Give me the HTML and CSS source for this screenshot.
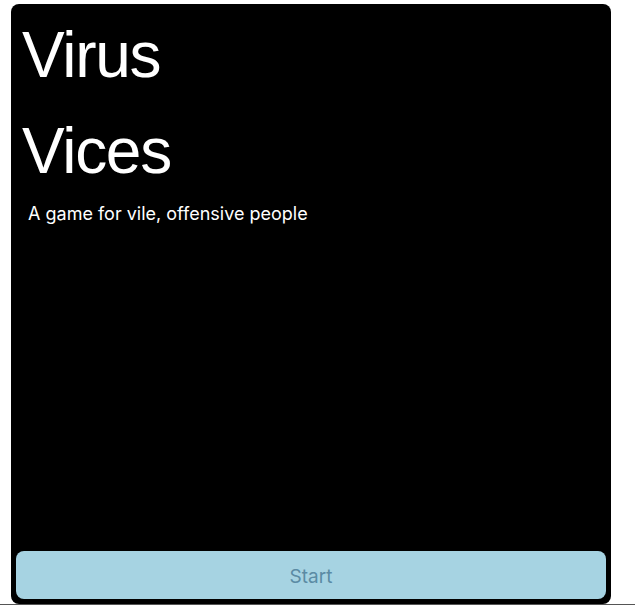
FILE: index.html
```html
<!DOCTYPE html>
<html>
<head>
<meta charset="utf-8">
<link rel="stylesheet" href="styles.css">
</head>
<body>
<div class="page">
  <div class="card">
    <h1 class="title">Virus</h1>
    <h1 class="title">Vices</h1>
    <p class="tagline">A game for vile, offensive people</p>
    <button class="start">Start</button>
  </div>
</div>
<div class="rule"></div>
</body>
</html>
```
FILE: styles.css
```css
html, body {
  margin: 0;
  padding: 0;
  background: #fff;
  overflow: hidden;
}
.page {
  padding: 4px 0 0 11px;
}
.card {
  width: 600px;
  height: 600px;
  box-sizing: border-box;
  background: #000;
  border-radius: 8px;
  padding: 3px 5px 5px 5px;
  display: flex;
  flex-direction: column;
  font-family: Inter, "Liberation Sans", Arial, sans-serif;
  color: #fff;
}
.title {
  margin: 0;
  padding-left: 6px;
  font-family: "Liberation Sans", Arial, sans-serif;
  font-size: 64px;
  font-weight: normal;
  letter-spacing: -1.3px;
  line-height: 96px;
}
.tagline {
  margin: 3px 0 0 0;
  padding-left: 12px;
  font-size: 18px;
  line-height: 24px;
}
.start {
  margin-top: auto;
  height: 48px;
  width: 100%;
  border: none;
  border-radius: 8px;
  background: #a6d3e2;
  color: #5b8ba4;
  font-family: Inter, "Liberation Sans", Arial, sans-serif;
  font-size: 19px;
  padding: 3px 0 0 0;
}
.rule {
  height: 1px;
  background: #555;
}
```
